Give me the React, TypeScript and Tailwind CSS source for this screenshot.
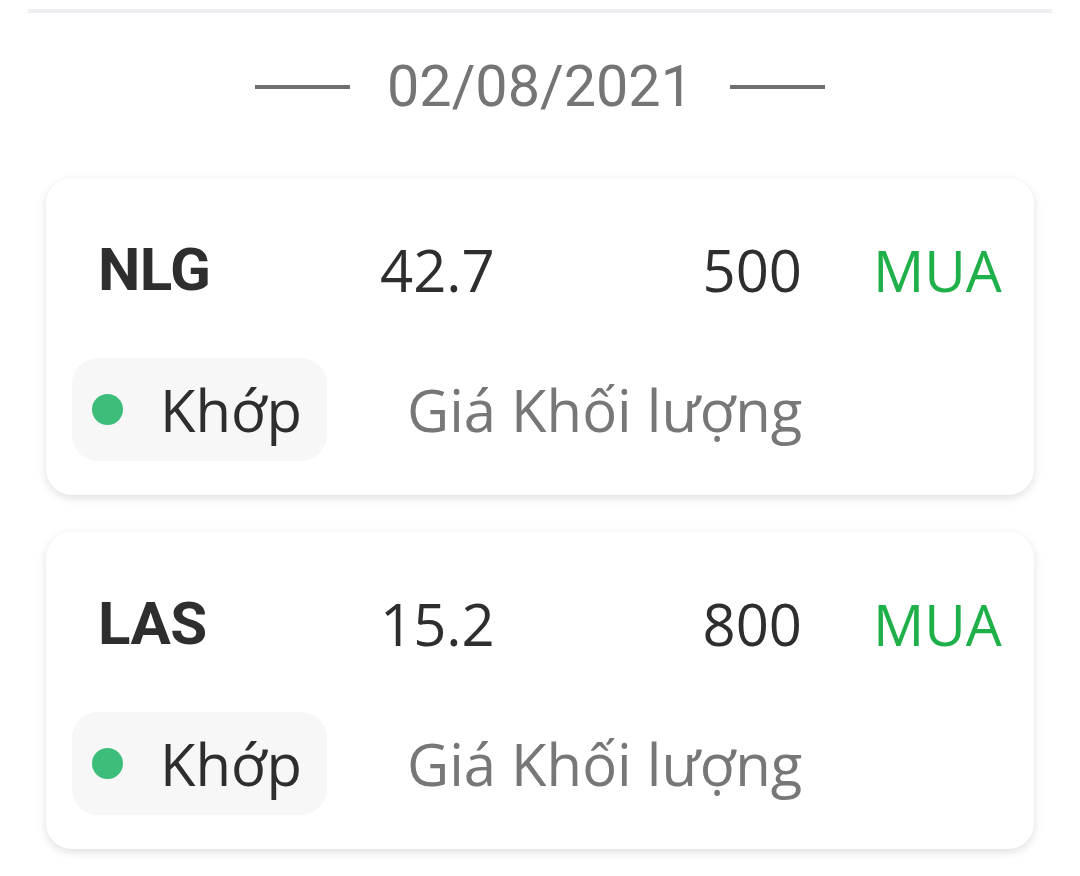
const orders = [
  { code: "NLG", price: "42.7", volume: "500", side: "MUA" },
  { code: "LAS", price: "15.2", volume: "800", side: "MUA" },
]

const OrderCard = ({ order }: { order: (typeof orders)[number] }) => {
  return (
    <div className="rounded-[26px] bg-white px-[26px] pb-[34px] shadow-[0_3px_10px_rgba(0,0,0,0.13)]">
      <div className="mt-[62px] flex h-[60px] items-center pl-[26px]">
        <div className="w-[282px] font-['Roboto',sans-serif] text-[60px] font-bold leading-none tracking-[-0.5px] text-[#2e2e2e]">
          {order.code}
        </div>
        <div className="w-[211px] font-['Open_Sans',sans-serif] text-[58px] leading-none text-[#2e2e2e]">
          {order.price}
        </div>
        <div className="w-[211px] text-right font-['Open_Sans',sans-serif] text-[58px] leading-none text-[#2e2e2e]">
          {order.volume}
        </div>
        <div className="ml-[71px] font-['Open_Sans',sans-serif] text-[57px] leading-none text-[#20b04a]">
          {order.side}
        </div>
      </div>
      <div className="mt-[58px] flex items-center">
        <div className="flex h-[103px] w-[255px] items-center rounded-[26px] bg-[#f7f7f7] pl-[20px]">
          <span className="h-[31px] w-[31px] rounded-full bg-[#3dbd7a]" />
          <span className="ml-[37px] font-['Open_Sans',sans-serif] text-[58px] leading-none text-[#2e2e2e]">
            Khớp
          </span>
        </div>
        <div className="ml-[80px] font-['Open_Sans',sans-serif] text-[58px] leading-none text-[#777777]">
          Giá Khối lượng
        </div>
      </div>
    </div>
  )
}

export default function App() {
  return (
    <div className="min-h-[876px] w-[1080px] bg-white pt-[9px]">
      <div className="mx-[28px] h-[4px] bg-[#efeff3]" />
      <div className="flex h-[146px] items-center justify-center pt-[2px]">
        <div className="h-[4px] w-[95px] bg-[#707070]" />
        <div className="mx-[37px] font-['Roboto',sans-serif] text-[57.5px] leading-none text-[#757575]">
          02/08/2021
        </div>
        <div className="h-[4px] w-[95px] bg-[#707070]" />
      </div>
      <div className="mt-[19px] flex flex-col gap-[37px] px-[46px]">
        {orders.map((order) => (
          <OrderCard key={order.code} order={order} />
        ))}
      </div>
    </div>
  )
}
